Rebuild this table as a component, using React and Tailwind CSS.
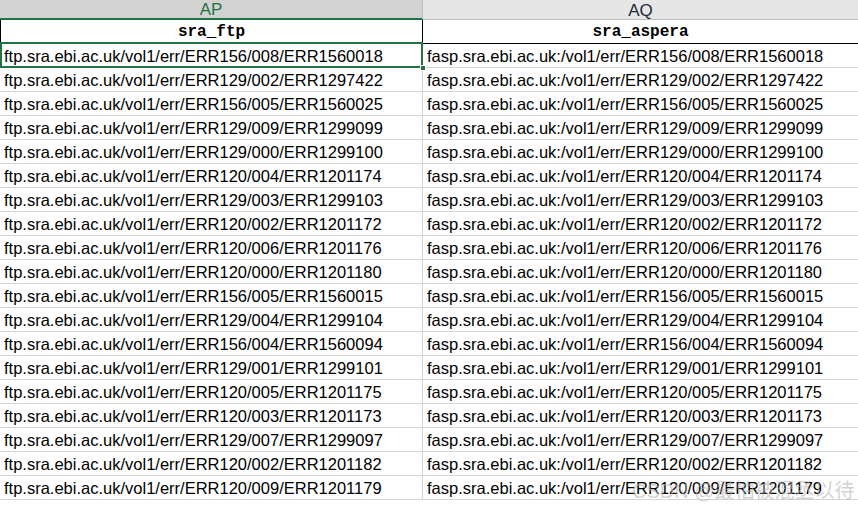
import React from 'react';

const rows = [
  ['156/008', '1560018'],
  ['129/002', '1297422'],
  ['156/005', '1560025'],
  ['129/009', '1299099'],
  ['129/000', '1299100'],
  ['120/004', '1201174'],
  ['129/003', '1299103'],
  ['120/002', '1201172'],
  ['120/006', '1201176'],
  ['120/000', '1201180'],
  ['156/005', '1560015'],
  ['129/004', '1299104'],
  ['156/004', '1560094'],
  ['129/001', '1299101'],
  ['120/005', '1201175'],
  ['120/003', '1201173'],
  ['129/007', '1299097'],
  ['120/002', '1201182'],
  ['120/009', '1201179'],
];

const cellFont = { fontFamily: '"Liberation Sans", Arial, sans-serif' };

const App = () => {
  return (
    <div className="relative w-[858px] h-[505px] overflow-hidden bg-white text-black" style={cellFont}>
      {/* column letters */}
      <div className="flex h-[20px]">
        <div className="w-[423px] shrink-0 bg-[#d2d2d2] border-b-2 border-r border-b-[#217346] border-r-[#bdbdbd] flex items-center justify-center text-[17px] text-[#217346] leading-none pt-[1px]">
          AP
        </div>
        <div className="flex-1 bg-[#e6e6e6] border-b border-b-[#bdbdbd] flex items-center justify-center text-[17px] text-[#222a3a] leading-none pt-[1px]">
          AQ
        </div>
      </div>

      {/* header row */}
      <div className="flex h-[24px] font-['Liberation_Mono',monospace] font-bold text-[16px]">
        <div className="w-[423px] shrink-0 border-l border-r border-b border-black flex items-center justify-center pt-[1px]">
          sra_ftp
        </div>
        <div className="flex-1 border-b border-black flex items-center justify-center pt-[1px]">
          sra_aspera
        </div>
      </div>

      {/* data rows */}
      {rows.map(([dir, id], i) => (
        <div key={i} className="flex h-[24px] text-[16.5px] leading-none">
          <div className="w-[423px] shrink-0 border-r border-b border-[#d4d4d4] flex items-center pl-[4px] pt-[1px] whitespace-nowrap">
            ftp.sra.ebi.ac.uk/vol1/err/ERR{dir}/ERR{id}
          </div>
          <div className="flex-1 border-b border-[#d4d4d4] flex items-center pl-[4px] pt-[1px] whitespace-nowrap">
            fasp.sra.ebi.ac.uk:/vol1/err/ERR{dir}/ERR{id}
          </div>
        </div>
      ))}

      {/* selected cell */}
      <div className="absolute left-0 top-[42px] w-[423px] h-[26px] border-2 border-[#217346] pointer-events-none" />
      <div className="absolute left-[420px] top-[65px] w-[6px] h-[6px] bg-[#217346] border border-white" />

      {/* watermark */}
      <div
        className="absolute left-[632px] top-[476px] text-[20px] text-[#b4b4b4]/60 whitespace-nowrap pointer-events-none"
        style={{ fontFamily: '"Liberation Sans", "Noto Sans CJK SC", sans-serif' }}
      >
        CSDN @最怕被混丞以待
      </div>
    </div>
  );
};

export default App;
